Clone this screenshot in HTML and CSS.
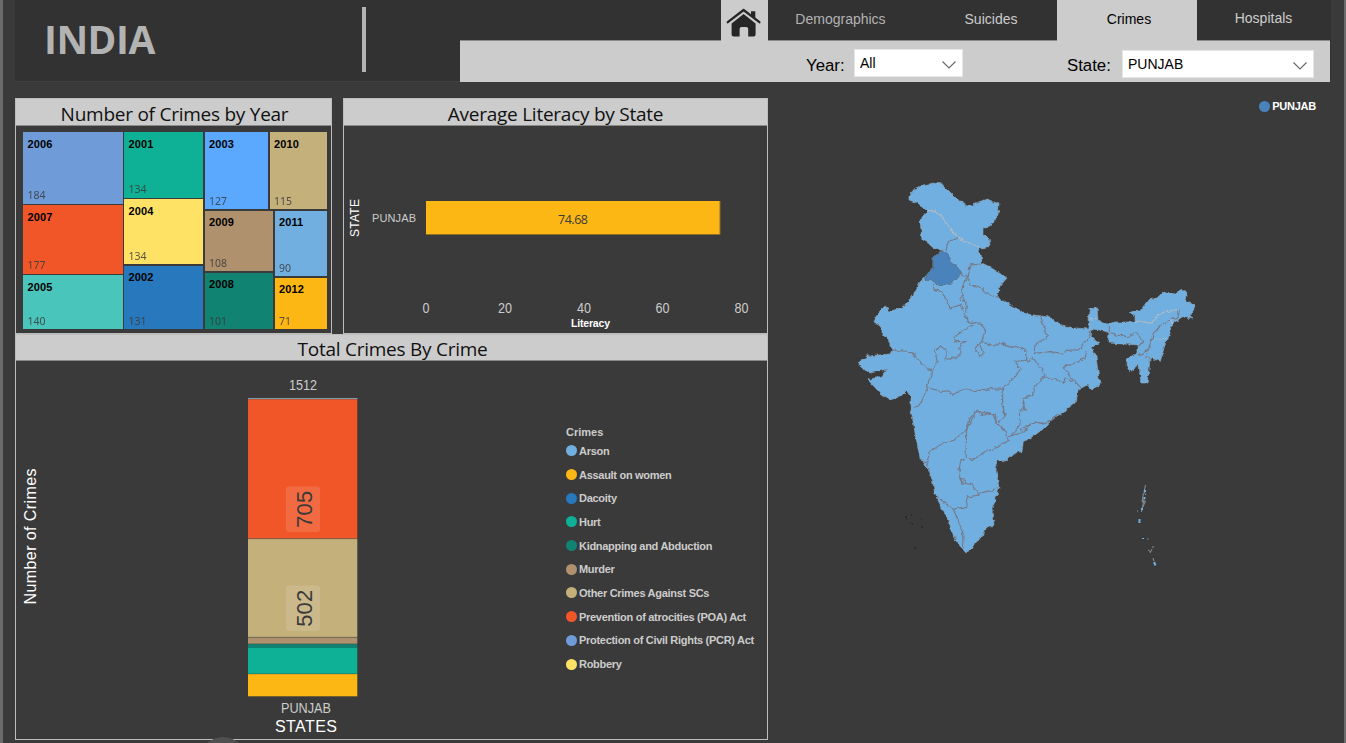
FILE: index.html
```html
<!DOCTYPE html>
<html lang="en">
<head>
<meta charset="utf-8">
<title>India – Crimes</title>
<link rel="stylesheet" href="styles.css">
</head>
<body>
<div class="page">
  <header class="header">
    <div class="brand">
      <h1 class="brand-name">INDIA</h1>
      <span class="brand-rule"></span>
    </div>
    <div class="nav">
      <nav class="tabs">
        <a class="tab tab-home">
          <svg width="36" height="30" viewBox="0 0 36 30">
            <path d="M25 3.2h4.3v8L25 7.6z" fill="#262626"/>
            <path d="M1.8 14.2 17.6 2 33.4 14.2" fill="none" stroke="#262626" stroke-width="2.3" stroke-linecap="round" stroke-linejoin="round"/>
            <path d="M17.6 6 29.6 15.4V26.500q0 2-2 2H22.200V21q0-2-2-2h-4.600q-2 0-2 2v7.500H7.600q-2 0-2-2V15.400z" fill="#262626"/>
          </svg>
        </a>
        <a class="tab tab-demographics">Demographics</a>
        <a class="tab tab-suicides">Suicides</a>
        <a class="tab tab-crimes">Crimes</a>
        <a class="tab tab-hospitals">Hospitals</a>
      </nav>
      <div class="filters">
        <span class="filter-label label-year">Year:</span>
        <div class="select select-year"><span>All</span>
          <svg class="chevron" width="16" height="10" viewBox="0 0 16 10"><path d="M1.500 1.500 8 8l6.500-6.500"/></svg></div>
        <span class="filter-label label-state">State:</span>
        <div class="select select-state"><span>PUNJAB</span>
          <svg class="chevron" width="16" height="10" viewBox="0 0 16 10"><path d="M1.500 1.500 8 8l6.500-6.500"/></svg></div>
      </div>
    </div>
  </header>

  <main class="main">
    <div class="charts">
      <div class="top-row">
        <section class="panel panel-years">
          <h2 class="panel-title">Number of Crimes by Year</h2>
          <div class="treemap">
            <div class="col col-a">
              <div class="cell y2006"><b>2006</b><span>184</span></div>
              <div class="cell y2007"><b>2007</b><span>177</span></div>
              <div class="cell y2005"><b>2005</b><span>140</span></div>
            </div>
            <div class="col col-b">
              <div class="cell y2001"><b>2001</b><span>134</span></div>
              <div class="cell y2004"><b>2004</b><span>134</span></div>
              <div class="cell y2002"><b>2002</b><span>131</span></div>
            </div>
            <div class="col col-c">
              <div class="row row-top">
                <div class="cell y2003"><b>2003</b><span>127</span></div>
                <div class="cell y2010"><b>2010</b><span>115</span></div>
              </div>
              <div class="row row-bottom">
                <div class="col col-d">
                  <div class="cell y2009"><b>2009</b><span>108</span></div>
                  <div class="cell y2008"><b>2008</b><span>101</span></div>
                </div>
                <div class="col col-e">
                  <div class="cell y2011"><b>2011</b><span>90</span></div>
                  <div class="cell y2012"><b>2012</b><span>71</span></div>
                </div>
              </div>
            </div>
          </div>
        </section>

        <section class="panel panel-literacy">
          <h2 class="panel-title">Average Literacy by State</h2>
          <svg class="literacy-chart" width="423" height="207" viewBox="344 126 423 207">
            <rect x="426" y="201" width="294" height="33.500" fill="#fdb714"/>
            <path d="M426 234.500h294V201" fill="none" stroke="#8f6f24"/>
            <text class="bar-value" x="573" y="223.500" textLength="30">74.68</text>
            <text class="axis-title" transform="translate(359 218) rotate(-90)" textLength="38">STATE</text>
            <text class="category" x="394" y="222" textLength="44">PUNJAB</text>
            <text class="tick" x="426" y="313" textLength="7" lengthAdjust="spacingAndGlyphs">0</text>
            <text class="tick" x="505" y="313" textLength="14" lengthAdjust="spacingAndGlyphs">20</text>
            <text class="tick" x="584" y="313" textLength="14" lengthAdjust="spacingAndGlyphs">40</text>
            <text class="tick" x="662.500" y="313" textLength="14" lengthAdjust="spacingAndGlyphs">60</text>
            <text class="tick" x="741.500" y="313" textLength="14" lengthAdjust="spacingAndGlyphs">80</text>
            <text class="axis-small" x="590.500" y="326.500" textLength="39">Literacy</text>
          </svg>
        </section>
      </div>

      <section class="panel panel-total">
        <h2 class="panel-title">Total Crimes By Crime</h2>
        <div class="total-body">
          <svg class="total-chart" width="541" height="378" viewBox="16 361 541 378">
            <text class="axis-large" transform="translate(36 536.500) rotate(-90)" textLength="136">Number of Crimes</text>
            <text class="tick" x="303" y="390" textLength="28" lengthAdjust="spacingAndGlyphs">1512</text>
            <g class="stack">
              <rect x="248" y="398" width="109.500" height="1.300" fill="#7e9aae"/>
              <rect x="248" y="399.300" width="109.500" height="139.400" fill="#f15628"/>
              <rect x="248" y="538.700" width="109.500" height="98.600" fill="#c4b07b"/>
              <rect x="248" y="637.300" width="109.500" height="6.700" fill="#af916d"/>
              <rect x="248" y="644" width="109.500" height="4" fill="#108372"/>
              <rect x="248" y="648" width="109.500" height="26" fill="#0fb196"/>
              <rect x="248" y="674" width="109.500" height="22.500" fill="#fdb714"/>
              <path d="M357.500 399V696.500H248M248 538.700h109.500M248 637.300h109.500M248 643.800h109.500M248 673.800h109.500" fill="none" stroke="#3a3a3a" stroke-opacity=".4"/>
            </g>
            <rect x="286" y="486.500" width="34" height="45.500" rx="3" fill="#fff" fill-opacity=".12"/>
            <text class="segment-value" transform="translate(312 509.300) rotate(-90)" textLength="37">705</text>
            <rect x="286" y="585.500" width="34" height="45.500" rx="3" fill="#fff" fill-opacity=".12"/>
            <text class="segment-value" transform="translate(312 608.300) rotate(-90)" textLength="37">502</text>
            <text class="tick tick-state" x="306" y="713" textLength="50" lengthAdjust="spacingAndGlyphs">PUNJAB</text>
            <text class="axis-large" x="306" y="732" textLength="62">STATES</text>
          </svg>
          <div class="legend">
            <div class="legend-title">Crimes</div>
            <div class="legend-item"><i class="c-arson"></i>Arson</div>
            <div class="legend-item"><i class="c-assault"></i>Assault on women</div>
            <div class="legend-item"><i class="c-dacoity"></i>Dacoity</div>
            <div class="legend-item"><i class="c-hurt"></i>Hurt</div>
            <div class="legend-item"><i class="c-kidnap"></i>Kidnapping and Abduction</div>
            <div class="legend-item"><i class="c-murder"></i>Murder</div>
            <div class="legend-item"><i class="c-other"></i>Other Crimes Against SCs</div>
            <div class="legend-item"><i class="c-poa"></i>Prevention of atrocities (POA) Act</div>
            <div class="legend-item"><i class="c-pcr"></i>Protection of Civil Rights (PCR) Act</div>
            <div class="legend-item"><i class="c-robbery"></i>Robbery</div>
          </div>
        </div>
      </section>
    </div>

    <section class="map-panel">
      <div class="map-legend"><i></i>PUNJAB</div>
      <svg class="map" width="550" height="600" viewBox="780 120 550 600">
        <defs>
          <filter id="rough" color-interpolation-filters="sRGB" filterUnits="userSpaceOnUse" x="780" y="120" width="550" height="600">
            <feTurbulence type="fractalNoise" baseFrequency="0.2" numOctaves="2" seed="4"/>
            <feDisplacementMap in="SourceGraphic" scale="4.500" xChannelSelector="R" yChannelSelector="G"/>
          </filter>
        </defs>
        <g filter="url(#rough)">
          <path class="land" d="M909 197 915 189 923 185 933 183 942 184 950 192 958 200 967 206 975 204 987 199 999 204 998 215 990 226 983 228 983 235 989 238 990 245 983 249 978 247 981 255 982 263 990 267 1007 278 1000 286 997 297 1010 305 1027 314 1048 317 1062 325 1075 328 1089 329 1088 318 1090 308 1097 307 1098 320 1108 324 1115 322 1135 322 1135 315 1129 312 1140 311 1148 300 1157 298 1164 291 1174 294 1182 289 1187 295 1186 302 1196 305 1193 311 1190 315 1193 319 1182 317 1172 324 1169 337 1165 345 1160 361 1150 358 1149 370 1147 383 1141 383 1139 365 1130 372 1126 365 1127 359 1138 353 1138 345 1108 343 1109 333 1100 330 1092 329 1091 337 1099 343 1091 348 1096 357 1100 385 1092 389 1088 385 1077 391 1075 403 1063 412 1052 420 1042 430 1023 443 1022 451 1012 455 1006 461 998 460 996 470 999 488 993 507 994 525 987 527 983 537 975 542 972 549 965 552 955 540 947 517 935 495 932 478 920 458 915 433 911 410 911 398 907 391 902 396 890 400 882 395 868 380 882 376 887 369 880 371 870 373 862 368 858 363 867 356 890 354 892 350 887 337 882 335 882 327 874 322 877 315 885 307 890 311 902 308 913 295 920 282 925 277 933 267 933 257 943 251 935 248 922 240 920 220 927 211 922 206 915 202 909 200Z"/>
          <path class="selected" d="M933 257 943 251 948 255 951 263 957 266 961 273 955 280 950 284 940 286 933 281 925 280 927 273 933 267Z"/>
          <g class="borders">
            <g transform="translate(900 170) scale(.3333)">
              <path class="light" d="M80 122 105 122 125 140 150 175 175 205 205 217 235 232"/>
              <path d="M175 205 145 215 138 240M183 310 188 318 205 318 210 285 246 282M205 318 210 345 240 350 262 372 292 382M98 340 102 358 125 365 150 415 180 405 190 425 205 460M205 318 188 345 185 380 200 400 197 420 205 455M192 380a7 7 0 1 0 1 10"/>
            </g>
            <g transform="translate(850 270) scale(.3333)">
              <path d="M125 240 185 245 215 280 245 305 235 340 232 350 270 365 300 362 305 375 350 355 375 365 415 356 460 358M245 300 262 280 255 240 275 230 292 245 285 270 330 260 330 230 345 215 315 215 315 200 375 158M350 155 375 158 398 165 405 180 395 215 430 228 455 218 480 232 500 226 530 240 530 270 495 275 512 297 490 325 465 350 455 370 455 400 465 435M395 215 375 235 390 260 400 250 390 225M232 350 220 385 205 408 190 412M350 480 378 423 400 435 435 432 440 460 465 480M540 375 520 385 520 415 530 420"/>
            </g>
            <g transform="translate(1020 270) scale(.3333)">
              <path d="M60 135 75 180 85 200 45 225 42 250 90 245 130 250 150 240 175 240 205 205 215 180M200 245 195 265 165 280 130 290 150 320 185 355M65 325 105 325 130 340 135 325 160 335M0 240 20 245 20 275 40 265 65 300 75 315 45 350 40 375 10 385 10 415M478 117 475 140 430 160 400 190 385 240 355 255M272 192 320 200 350 187 368 215 355 230M268 165 268 190M385 240 378 265 390 265M0 480 45 455 70 462 95 450"/>
              <path class="light" d="M345 157 400 155 420 130 478 117M400 210 440 205M208 148 232 145M455 150 455 165"/>
            </g>
            <g transform="translate(890 400) scale(.3333)">
              <path d="M97 183 110 185 120 155 165 125 190 122 230 88 240 55 260 33 310 45 320 72 350 100 355 122 320 142 290 155 250 178 228 175 230 88M110 185 118 215M355 110 400 95 435 62 460 72 480 65 500 45M335 0 345 45 325 70M400 0 405 30 388 30 390 75 365 105M228 175 212 180 207 215 215 245 245 255 268 285 235 290 230 320 190 328 140 290M268 280 300 272 328 262M190 328 210 375 222 410 220 445M210 235 226 238 226 250 212 250z"/>
            </g>
          </g>
        </g>
        <g class="islands">
          <path d="M1145.500 485 1144 492 1146 495M1143.500 493 1142 502 1145.500 501 1143 507M1144.500 497 1141.500 512M1137 511h1M1147 539h1.500M1148 550l3 2M1153 546v2M1152 549l-2 4M1153 558l1 3"/>
          <path class="island-blue" d="M1145 490v2M1144.500 497v2M1142 508v2M1139.500 519v4M1143 538v1M1154 562l1.500 3.500"/>
          <path class="specks" d="M905 517h2M911 515h1M906 519h1M912 524h1M921 519h1M921 527h2M910 523h1M914 548h2"/>
        </g>
      </svg>
    </section>
  </main>
  <span class="floating-handle"></span>
</div>
</body>
</html>
```

FILE: styles.css
```css
* { box-sizing: border-box; }

body {
  margin: 0;
  background: #3a3a3a;
  font-family: "Liberation Sans", Arial, sans-serif;
}

.page {
  position: relative;
  width: 1346px;
  height: 743px;
  padding: 0 13px 0 12px;
  border-left: 3px solid #6b6b6b;
  border-right: 2px solid #6b6b6b;
  background: #3a3a3a;
  overflow: hidden;
}

/* Header */
.header {
  display: flex;
  height: 82px;
  background: #323232;
  border-bottom: 1px solid #3f3f3f;
}

.brand {
  display: flex;
  justify-content: space-between;
  width: 445px;
  padding: 7px 94px 0 29px;
}

.brand-name {
  margin: 5px 0 0;
  color: #b3b3b3;
  font: bold 39px/54px "Open Sans", "Noto Sans", sans-serif;
  letter-spacing: -0.5px;
}

.brand-rule {
  width: 4px;
  height: 65px;
  background: #b3b3b3;
}

.nav { width: 870px; }

.tabs {
  display: flex;
  height: 40px;
  padding-left: 261px;
}

.tab {
  display: flex;
  justify-content: center;
  color: #ccc;
  font-size: 14px;
  line-height: 38px;
}

.tab-home { width: 47px; padding-top: 8px; padding-right: 2px; background: #ccc; }
.tab-demographics { width: 145px; color: #b3b3b3; }
.tab-suicides { width: 144px; padding-left: 12px; }
.tab-crimes { width: 140px; padding-left: 4px; background: #ccc; color: #000; }
.tab-hospitals { width: 133px; line-height: 36px; }
.tab-home, .tab-crimes { height: 41px; z-index: 1; }

.filters {
  display: flex;
  height: 42px;
  padding-left: 346px;
  background: #ccc;
  border-top: 1px solid #8a8a8a;
}

.filter-label { color: #000; font-size: 16.800px; line-height: 49px; }
.label-year { width: 48px; }
.label-state { width: 55px; margin-left: 104px; }

.select {
  display: flex;
  justify-content: space-between;
  height: 28px;
  background: #fff;
  border: 1px solid #e6e6e6;
  color: #000;
  font-size: 14px;
  line-height: 27px;
}

.select-year { width: 109px; margin-top: 8px; padding: 0 5px; }
.select-state { width: 192px; margin-top: 9px; padding: 0 5px; line-height: 26px; }

.chevron { margin-top: 10px; }
.chevron path { fill: none; stroke: #666; stroke-width: 1.1; }

/* Body */
.main { display: flex; padding-top: 16px; }
.charts { width: 753px; }
.top-row { display: flex; justify-content: space-between; }

.panel { border: 1px solid #bdbdbd; }
.panel-years { width: 317px; height: 236px; }
.panel-literacy { width: 425px; height: 236px; }
.panel-total { height: 406px; }

.panel-title {
  height: 27px;
  margin: 0;
  background: #ccc;
  border-bottom: 1px solid #8a8a8a;
  color: #111;
  font: 400 19px/31px "Open Sans", "Noto Sans", sans-serif;
  letter-spacing: -0.25px;
  text-align: center;
}
.panel-years .panel-title { padding-left: 2px; }
.panel-total .panel-title { height: 26px; padding-left: 2px; line-height: 29px; }

/* Treemap */
.treemap {
  display: flex;
  gap: 1.500px;
  height: 197px;
  margin: 6px 4px 0 7px;
}

.col { display: flex; flex-direction: column; gap: 1.500px; }
.row { display: flex; gap: 1.500px; }
.col-a { width: 99.500px; }
.col-b { width: 79px; }
.col-c { flex: 1; }
.row-top { height: 77px; }
.row-bottom { height: 118.500px; }
.col-d { width: 68.500px; }
.col-e { flex: 1; }

.cell {
  display: flex;
  flex-direction: column;
  justify-content: space-between;
  padding: 4.500px 4.500px .5px;
}
.cell b { color: #000; font-size: 11px; line-height: 15px; letter-spacing: 0.1px; }
.cell span {
  color: #3a3a3a;
  opacity: .85;
  font: 10.500px/15px "Noto Sans", sans-serif;
}

.y2006 { height: 71.500px; background: #6f9bd8; }
.y2007 { height: 68.500px; background: #f15628; }
.y2005 { flex: 1; background: #4ac5bb; }
.y2001 { height: 65.500px; background: #0fb196; }
.y2004 { height: 65px; background: #fee266; }
.y2002 { flex: 1; background: #2878bd; }
.y2003 { width: 63.500px; background: #5ba8ff; }
.y2010 { flex: 1; background: #c4b07b; }
.y2009 { height: 60.500px; background: #af916d; }
.y2008 { flex: 1; background: #108372; }
.y2011 { height: 65.500px; background: #70afe0; }
.y2012 { flex: 1; background: #fdb714; }

/* Chart text */
svg { display: block; }
text { text-anchor: middle; }
.bar-value { font: 12.500px "Open Sans", sans-serif; fill: #3a3a3a; }
.axis-title { font-size: 12px; fill: #fff; }
.category { font-size: 11px; fill: #ccc; }
.tick { font-size: 14px; fill: #ccc; }
.axis-small { font-size: 10.500px; font-weight: bold; fill: #fff; }
.axis-large { font-size: 16px; fill: #fff; }
.segment-value { font-size: 22px; fill: #3a3a3a; }

.total-body { display: flex; }

/* Crimes legend */
.legend {
  padding: 64px 0 0 9px;
  color: #ccc;
  font-size: 11px;
  font-weight: bold;
  letter-spacing: -0.29px;
  white-space: nowrap;
}
.legend-title { height: 14px; line-height: 14px; letter-spacing: 0; }
.legend-item {
  display: flex;
  align-items: center;
  gap: 2px;
  height: 23.700px;
}
.legend-item i { width: 11px; height: 11px; border-radius: 50%; }
.c-arson { background: #70afe0; }
.c-assault { background: #fdb714; }
.c-dacoity { background: #2878bd; }
.c-hurt { background: #0fb196; }
.c-kidnap { background: #108372; }
.c-murder { background: #af916d; }
.c-other { background: #c4b07b; }
.c-poa { background: #f15628; }
.c-pcr { background: #6f9bd8; }
.c-robbery { background: #fee266; }

/* Map */
.map-panel { width: 550px; margin-left: 12px; }
.map-legend {
  display: flex;
  align-items: center;
  justify-content: flex-end;
  gap: 2px;
  height: 16px;
  margin-bottom: 6px;
  padding-right: 14px;
  color: #fff;
  font-size: 11px;
  font-weight: bold;
  letter-spacing: -0.25px;
}
.map-legend i { width: 11px; height: 11px; border-radius: 50%; background: #4a82bc; }
.land { fill: #70afe0; stroke: #8fa9bd; stroke-width: .6; }
.selected { fill: #4a82bc; stroke: #5c6c78; stroke-width: .8; }
.borders { fill: none; stroke: #777987; stroke-width: 3.300; }
.borders .light { stroke: #b3bcc4; }
.islands { fill: none; stroke: #87919a; stroke-width: 1; }
.island-blue { stroke: #70afe0; stroke-width: 2; }
.specks { stroke: #1c1c1c; }

.floating-handle {
  position: absolute;
  left: 197px;
  top: 737px;
  width: 46px;
  height: 46px;
  border-radius: 50%;
  background: #505050;
}
```
